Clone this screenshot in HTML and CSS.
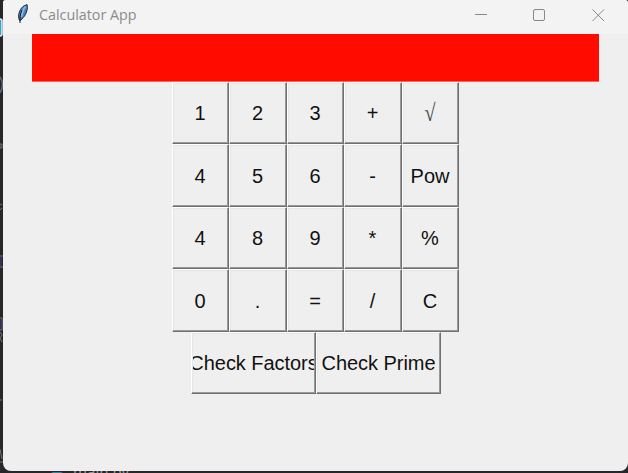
FILE: index.html
```
<!DOCTYPE html>
<html lang="en">
<head>
<meta charset="utf-8">
<title>Calculator App</title>
<link rel="stylesheet" href="styles.css">
</head>
<body>
<svg class="backdrop" width="628" height="473" aria-hidden="true">
  <rect x="-6" y="19" width="8" height="17" rx="2" fill="#2fa6d5" stroke="#eee" stroke-width="1.5"/>
  <path d="M0 77q5 7 0 16" stroke="#64727d" fill="none" stroke-width="1.5"/>
  <path d="M0 144h2v4H0zM0 204l2 1M0 210l2-2M0 256h3M0 267h3M0 318h2v12H0M0 332l2 3-2 3 2 4M0 400h2M0 449l2 10M0 462h3" stroke="#77777b" fill="none"/>
  <path d="M1 257v9M1 320v9" stroke="#373963" stroke-width="1.5"/>
  <path d="M51 472h12l-4 2h-4z" fill="#347fa0"/>
</svg>
<span class="editor-text">main.py</span>
<div class="window">
  <header class="titlebar">
    <svg class="feather" width="14" height="22" viewBox="0 0 14 22">
      <path d="M3.5 17.5C1.5 13 3 7 7 3.500L11 1.500C12 5 11 9 8.500 13L5 17z" fill="#4a86c8" stroke="#222b35" stroke-width="1"/>
      <path d="M9.500 3.500C6.500 7 6 10 5.500 14" fill="none" stroke="#8dbbe9" stroke-width="1.800"/>
      <path d="M6 7C4 11 4 15 4 20" fill="none" stroke="#171c22" stroke-width="1"/>
    </svg>
    <span class="title">Calculator App</span>
    <svg class="controls" width="132" height="14" viewBox="0 0 132 14" fill="none" stroke="#888">
      <path d="M0 6.500h12M117.500 1.500l11.500 11.500M129 1.500l-11.500 11.500"/>
      <rect x="58.500" y="1.500" width="11" height="11" rx="1.500"/>
    </svg>
  </header>
  <main>
    <div class="display"></div>
    <div class="keys">
      <button>1</button><button>2</button><button>3</button><button>+</button><button><span class="root">√</span></button>
      <button>4</button><button>5</button><button>6</button><button>-</button><button>Pow</button>
      <button>4</button><button>8</button><button>9</button><button>*</button><button>%</button>
      <button>0</button><button>.</button><button>=</button><button>/</button><button>C</button>
    </div>
    <div class="checks">
      <button><span class="label">Check Factors</span></button><button><span class="label">Check Prime</span></button>
    </div>
  </main>
</div>
</body>
</html>
```
FILE: styles.css
```
* { box-sizing: border-box; }
body {
  margin: 0;
  width: 628px;
  height: 473px;
  overflow: hidden;
  position: relative;
  background: #272729;
  font-family: "Liberation Sans", Arial, sans-serif;
}
.backdrop { position: absolute; inset: 0; }
.editor-text {
  position: absolute;
  left: 73px;
  top: 463px;
  color: #999;
  font: 15px/17px "Noto Sans", sans-serif;
}
.window {
  position: relative;
  margin-left: 3px;
  width: 625px;
  height: 471px;
  overflow: hidden;
  background: #efefef;
  border-radius: 3px 3px 8px 8px;
}
.titlebar {
  display: flex;
  height: 34px;
  padding: 3px 21px 0 13px;
  background: #f3f3f3;
}
.title {
  margin-left: 9px;
  color: #8b8b8b;
  font: 14.3px/24px "Open Sans", sans-serif;
  white-space: nowrap;
}
.controls { margin: 5px 0 0 auto; }
.display {
  width: 567px;
  height: 48px;
  margin-left: 29px;
  background: #ff0b00;
  border-bottom: 1px solid #ff6159;
}
.keys {
  display: grid;
  grid-template-columns: 57px 58px 57px 58px 57px;
  grid-template-rows: 62px 63px 62px 63px;
  margin-left: 169px;
}
.checks {
  display: grid;
  grid-template-columns: 125px 125px;
  grid-template-rows: 62px;
  margin-left: 188px;
}
button {
  display: flex;
  align-items: center;
  justify-content: center;
  min-width: 0;
  margin: 0;
  padding: 0 1px 0 0;
  overflow: hidden;
  border: 1px solid;
  border-color: #fff #707070 #707070 #fff;
  border-radius: 0;
  box-shadow: inset -1px -1px #999, inset 1px 1px #e6e6e6;
  background: #efefef;
  color: #111;
  font: 20px/24px "Liberation Sans", Arial, sans-serif;
  white-space: nowrap;
}
.checks button { padding: 0 1px; }
.label {
  display: flex;
  width: 100%;
  justify-content: center;
  overflow: hidden;
  letter-spacing: -0.05px;
}
.root {
  font-family: "Liberation Serif", serif;
  color: #444;
  transform: scaleY(1.2);
}
```
